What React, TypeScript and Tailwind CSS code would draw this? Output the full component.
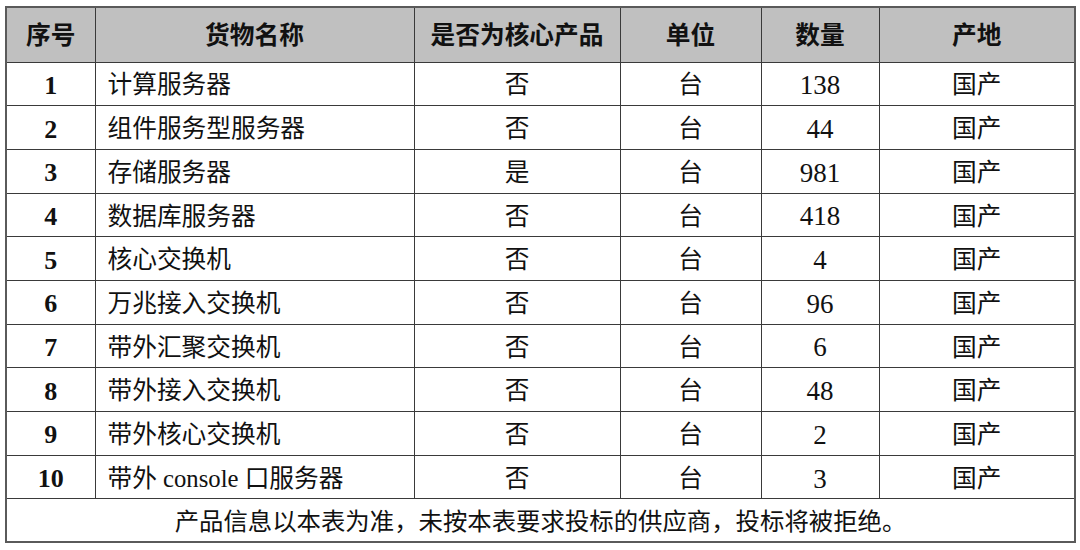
import React from 'react';

const rows = [
  { no: 1, name: '计算服务器', core: '否', unit: '台', qty: '138', origin: '国产' },
  { no: 2, name: '组件服务型服务器', core: '否', unit: '台', qty: '44', origin: '国产' },
  { no: 3, name: '存储服务器', core: '是', unit: '台', qty: '981', origin: '国产' },
  { no: 4, name: '数据库服务器', core: '否', unit: '台', qty: '418', origin: '国产' },
  { no: 5, name: '核心交换机', core: '否', unit: '台', qty: '4', origin: '国产' },
  { no: 6, name: '万兆接入交换机', core: '否', unit: '台', qty: '96', origin: '国产' },
  { no: 7, name: '带外汇聚交换机', core: '否', unit: '台', qty: '6', origin: '国产' },
  { no: 8, name: '带外接入交换机', core: '否', unit: '台', qty: '48', origin: '国产' },
  { no: 9, name: '带外核心交换机', core: '否', unit: '台', qty: '2', origin: '国产' },
  { no: 10, name: '带外 console 口服务器', core: '否', unit: '台', qty: '3', origin: '国产' },
];

const headers = ['序号', '货物名称', '是否为核心产品', '单位', '数量', '产地'];

const cell = 'border border-[#3a3a3a] p-0';
const body = 'border border-[#3a3a3a] px-0 pb-0 pt-[4px]';

export default function App() {
  return (
    <div className="w-[1080px] h-[550px] bg-white pl-[5px] pt-[6px] font-['Liberation_Serif','Noto_Sans_CJK_SC',serif] text-[#111]">
      <table className="w-[1069px] table-fixed border-collapse border-2 border-[#5a5a5a] text-[24.7px] leading-none">
        <colgroup>
          <col className="w-[89px]" />
          <col className="w-[319px]" />
          <col className="w-[206px]" />
          <col className="w-[141px]" />
          <col className="w-[118px]" />
          <col className="w-[196px]" />
        </colgroup>
        <thead>
          <tr className="h-[55px] bg-[#c0c0c0]">
            {headers.map((h) => (
              <th
                key={h}
                className={`${cell} pb-[3px] text-center font-bold font-['Noto_Sans_CJK_SC',sans-serif]`}
              >
                {h}
              </th>
            ))}
          </tr>
        </thead>
        <tbody>
          {rows.map((r) => (
            <tr key={r.no} className="h-[43.7px]">
              <td className={`${body} text-center text-[26px] font-bold`}>{r.no}</td>
              <td className={`${body} pl-[12px] text-left`}>{r.name}</td>
              <td className={`${body} text-center`}>{r.core}</td>
              <td className={`${body} text-center`}>{r.unit}</td>
              <td className={`${body} text-center text-[27px]`}>{r.qty}</td>
              <td className={`${body} text-center`}>{r.origin}</td>
            </tr>
          ))}
          <tr className="h-[43px]">
            <td colSpan={6} className={`${body} text-center text-[24.4px]`}>
              产品信息以本表为准，未按本表要求投标的供应商，投标将被拒绝。
            </td>
          </tr>
        </tbody>
      </table>
    </div>
  );
}
